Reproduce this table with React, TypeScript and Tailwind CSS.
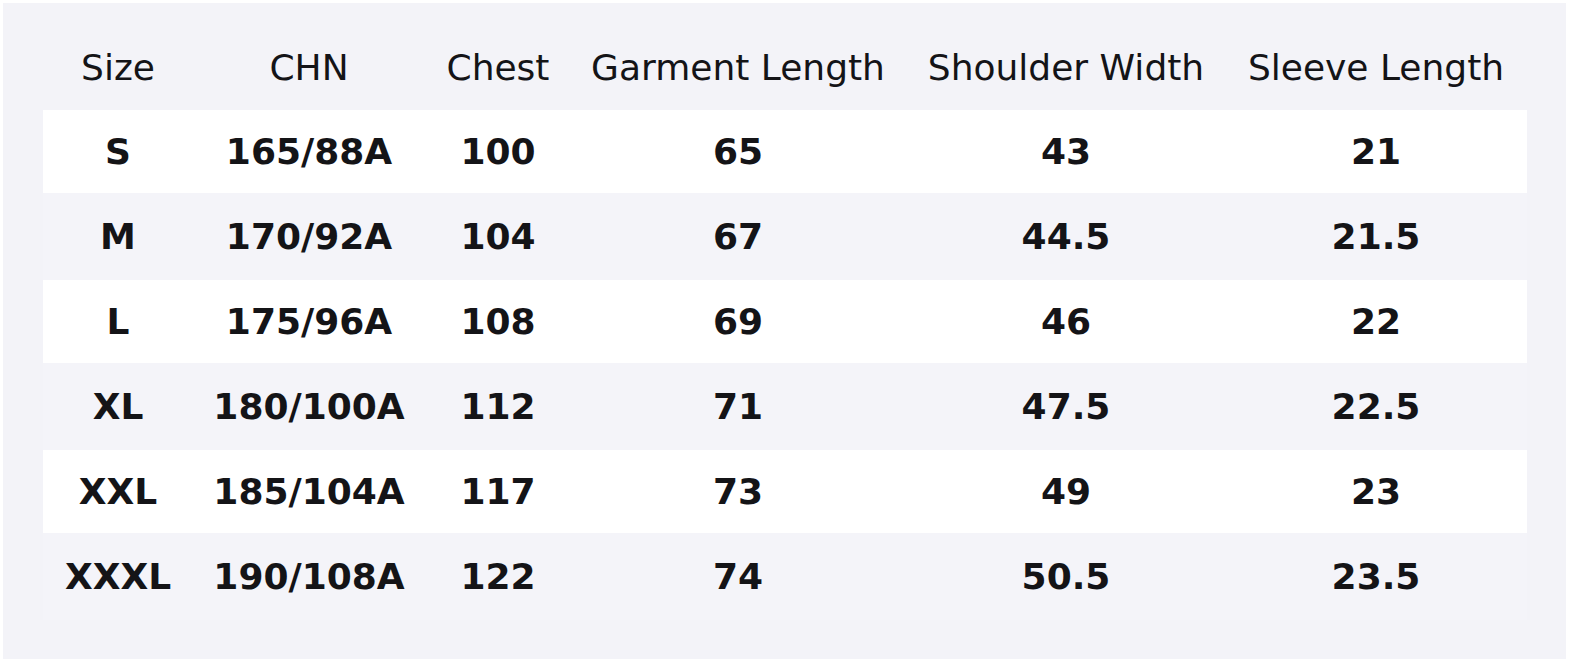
const headers = ["Size", "CHN", "Chest", "Garment Length", "Shoulder Width", "Sleeve Length"];

const rows = [
  ["S", "165/88A", "100", "65", "43", "21"],
  ["M", "170/92A", "104", "67", "44.5", "21.5"],
  ["L", "175/96A", "108", "69", "46", "22"],
  ["XL", "180/100A", "112", "71", "47.5", "22.5"],
  ["XXL", "185/104A", "117", "73", "49", "23"],
  ["XXXL", "190/108A", "122", "74", "50.5", "23.5"],
];

const cols = "grid w-[1482px] grid-cols-[150px_232px_146px_334px_322px_298px]";

const App = () => {
  return (
    <div className="bg-white p-[3px] w-[1570px] h-[663px] font-['DejaVu_Sans',sans-serif] text-[#141417]">
      <div className="w-[1563px] h-[656px] bg-[#f3f3f8] pt-[22px] pl-[40px]">
        <div className={`${cols} h-[85px] items-center text-[36px]`}>
          {headers.map((h) => (
            <div key={h} className="text-center whitespace-nowrap">
              {h}
            </div>
          ))}
        </div>
        {rows.map((row, i) => (
          <div
            key={row[0]}
            className={`w-[1484px] ${
              i % 2 === 0 ? "bg-white h-[83px]" : "bg-[#f4f4f9] h-[87px]"
            }`}
          >
            <div className={`${cols} h-full items-center text-[36px] font-bold`}>
              {row.map((cell, j) => (
                <div key={j} className="text-center whitespace-nowrap">
                  {cell}
                </div>
              ))}
            </div>
          </div>
        ))}
      </div>
    </div>
  );
};

export default App;
